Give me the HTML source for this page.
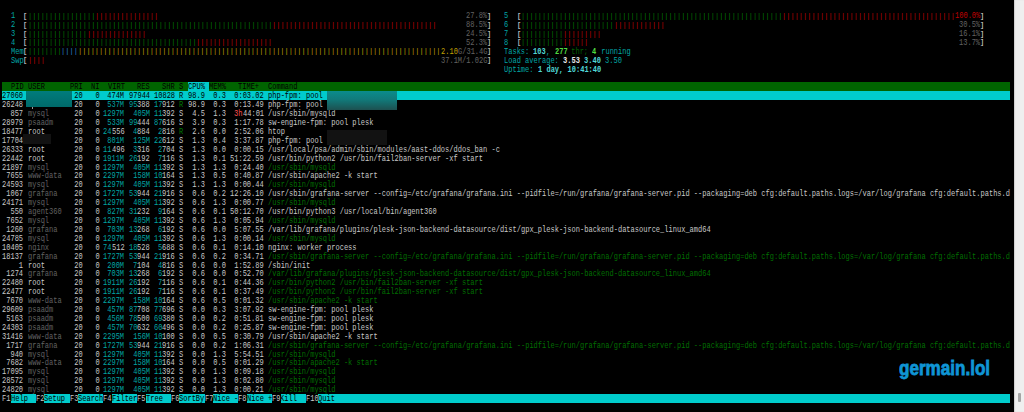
<!DOCTYPE html>
<html><head><meta charset="utf-8"><style>
html,body{margin:0;padding:0;background:#000;-webkit-font-smoothing:antialiased;width:1024px;height:412px;overflow:hidden;position:relative}
.row{position:absolute;left:0;height:8.906px;width:1024px}
.t{position:absolute;top:1.4px;white-space:pre;font-family:"Liberation Mono",monospace;font-size:9px;line-height:8.906px;height:8.906px;transform:scaleX(0.78061);transform-origin:0 0}
.bg{position:absolute;top:0}
.n{color:#c8c8c8}
.w{color:#eaeaea}
.c{color:#00a6a6}
.cb{color:#50d8d8}
.sh{color:#626262}
.g{color:#006e00}
.gt{color:#006000}
.gd{color:#007a00}
.gb{color:#50dc40}
.r{color:#c00000}
.rb{color:#ff5050}
.b{color:#2a84d0}
.y{color:#c0a000}
.k{color:#000000}

#strip{position:absolute;left:1014px;top:0;width:10px;height:412px;background:#efefef;box-shadow:inset 1px 0 1px #cfcfcf}
#thumb{position:absolute;left:1018px;top:392.5px;width:3px;height:9.5px;background:#a5a5a5;border-radius:1px}
.blur1{position:absolute;background:linear-gradient(#0a8c8c 0%,#117a7a 45%,#1d5050 100%)}
.blur1b{position:absolute;background:linear-gradient(#007c7c,#006a6a)}
.blur2{position:absolute;background:#121212}
.bar{font-size:7.5px !important;top:1px !important;transform:scaleX(0.93673) !important}
#wm{position:absolute;left:899.2px;top:356.6px;font-family:"Liberation Sans",sans-serif;font-weight:bold;font-size:100px;line-height:normal;color:#0f95d5;-webkit-text-stroke:4px #0f95d5;transform:scale(0.1707,0.197);transform-origin:0 0;white-space:pre}
.cb,.gb,.wb{font-weight:bold}
.wb{color:#eaeaea}
#wrap{position:absolute;left:0;top:0;width:1024px;height:412px;filter:none}
</style></head><body><div id="wrap">
<div class="bg" style="left:2.24px;top:82.004px;width:1007.62px;height:8.906px;background:#006400"></div>
<div class="bg" style="left:187.74px;top:82.004px;width:21.08px;height:8.906px;background:#00cccc"></div>
<div class="bg" style="left:2.24px;top:90.910px;width:1007.62px;height:8.906px;background:#00cccc"></div>
<div class="bg" style="left:10.67px;top:393.714px;width:25.30px;height:8.906px;background:#00cccc"></div>
<div class="bg" style="left:44.40px;top:393.714px;width:25.30px;height:8.906px;background:#00cccc"></div>
<div class="bg" style="left:78.13px;top:393.714px;width:25.30px;height:8.906px;background:#00cccc"></div>
<div class="bg" style="left:111.86px;top:393.714px;width:25.30px;height:8.906px;background:#00cccc"></div>
<div class="bg" style="left:145.58px;top:393.714px;width:25.30px;height:8.906px;background:#00cccc"></div>
<div class="bg" style="left:179.31px;top:393.714px;width:25.30px;height:8.906px;background:#00cccc"></div>
<div class="bg" style="left:213.04px;top:393.714px;width:25.30px;height:8.906px;background:#00cccc"></div>
<div class="bg" style="left:246.77px;top:393.714px;width:25.30px;height:8.906px;background:#00cccc"></div>
<div class="bg" style="left:280.50px;top:393.714px;width:25.30px;height:8.906px;background:#00cccc"></div>
<div class="bg" style="left:318.44px;top:393.714px;width:691.42px;height:8.906px;background:#00cccc"></div>
<div class="row" style="top:10.756px"><span class="t c" style="left:10.672px">1</span><span class="t bar w" style="left:23.320px">[</span><span class="t bar gd" style="left:27.536px">||||||||||||||||</span><span class="t bar r" style="left:94.992px">|||||||||||||||</span><span class="t sh" style="left:466.000px">27.8%</span><span class="t bar w" style="left:487.080px">]</span><span class="t c" style="left:503.944px">5</span><span class="t bar w" style="left:516.592px">[</span><span class="t bar gd" style="left:520.808px">||||||||||||||||||||||||||||||||||||||||||||||||||||||||||||||</span><span class="t bar r" style="left:782.200px">|||||||||||||||||||||||||||||||||||||||||</span><span class="t r" style="left:955.056px">100.0%</span><span class="t bar w" style="left:980.352px">]</span></div>
<div class="row" style="top:19.662px"><span class="t c" style="left:10.672px">2</span><span class="t bar w" style="left:23.320px">[</span><span class="t bar gd" style="left:27.536px">||||||||||||||||||||||||||||||||||||||||||||||||||||||||||</span><span class="t bar r" style="left:272.064px">|||||||||||||||||||||||||||||||||||||||</span><span class="t sh" style="left:466.000px">88.5%</span><span class="t bar w" style="left:487.080px">]</span><span class="t c" style="left:503.944px">6</span><span class="t bar w" style="left:516.592px">[</span><span class="t bar gd" style="left:520.808px">||||||||||||||||||||||</span><span class="t bar r" style="left:613.560px">||||||||||||</span><span class="t sh" style="left:959.272px">30.5%</span><span class="t bar w" style="left:980.352px">]</span></div>
<div class="row" style="top:28.568px"><span class="t c" style="left:10.672px">3</span><span class="t bar w" style="left:23.320px">[</span><span class="t bar gd" style="left:27.536px">||||||||||||||</span><span class="t bar r" style="left:86.560px">||||||||||||||</span><span class="t sh" style="left:466.000px">24.5%</span><span class="t bar w" style="left:487.080px">]</span><span class="t c" style="left:503.944px">7</span><span class="t bar w" style="left:516.592px">[</span><span class="t bar gd" style="left:520.808px">||||||||||</span><span class="t bar r" style="left:562.968px">|||||||||</span><span class="t sh" style="left:959.272px">16.1%</span><span class="t bar w" style="left:980.352px">]</span></div>
<div class="row" style="top:37.474px"><span class="t c" style="left:10.672px">4</span><span class="t bar w" style="left:23.320px">[</span><span class="t bar gd" style="left:27.536px">||||||||||||||||||||||||||||||||||||||||</span><span class="t bar r" style="left:196.176px">||||||||||||||||||</span><span class="t sh" style="left:466.000px">52.3%</span><span class="t bar w" style="left:487.080px">]</span><span class="t c" style="left:503.944px">8</span><span class="t bar w" style="left:516.592px">[</span><span class="t bar gd" style="left:520.808px">||||||||||</span><span class="t bar r" style="left:562.968px">||||||</span><span class="t sh" style="left:959.272px">13.7%</span><span class="t bar w" style="left:980.352px">]</span></div>
<div class="row" style="top:46.380px"><span class="t c" style="left:10.672px">Mem</span><span class="t bar w" style="left:23.320px">[</span><span class="t bar gd" style="left:27.536px">||||||||</span><span class="t bar b" style="left:61.264px">||||</span><span class="t bar y" style="left:78.128px">||||||||||||||||||||||||||||||||||||||||||||||||||||||||||||||||||||||||||||||||||||||</span><span class="t y" style="left:440.704px">2.10</span><span class="t sh" style="left:457.568px">G/31.4G</span><span class="t bar w" style="left:487.080px">]</span><span class="t c" style="left:503.944px">Tasks: </span><span class="t cb" style="left:533.456px">103</span><span class="t c" style="left:546.104px">, </span><span class="t gb" style="left:554.536px">277</span><span class="t gt" style="left:567.184px"> thr;</span><span class="t c" style="left:588.264px"> </span><span class="t gb" style="left:592.480px">4</span><span class="t c" style="left:596.696px"> running</span></div>
<div class="row" style="top:55.286px"><span class="t c" style="left:10.672px">Swp</span><span class="t bar w" style="left:23.320px">[</span><span class="t bar r" style="left:27.536px">||||</span><span class="t sh" style="left:440.704px">37.1M/1.02G</span><span class="t bar w" style="left:487.080px">]</span><span class="t c" style="left:503.944px">Load average: </span><span class="t wb" style="left:562.968px">3.53 </span><span class="t cb" style="left:584.048px">3.40 </span><span class="t c" style="left:605.128px">3.50</span></div>
<div class="row" style="top:64.192px"><span class="t c" style="left:503.944px">Uptime: </span><span class="t cb" style="left:537.672px">1 day, 10:41:40</span></div>
<div class="row" style="top:82.004px"><span class="t k" style="left:10.672px">PID</span><span class="t k" style="left:27.536px">USER</span><span class="t k" style="left:69.696px">PRI</span><span class="t k" style="left:90.776px">NI</span><span class="t k" style="left:107.640px">VIRT</span><span class="t k" style="left:137.152px">RES</span><span class="t k" style="left:162.448px">SHR</span><span class="t k" style="left:179.312px">S</span><span class="t k" style="left:187.744px">CPU%</span><span class="t k" style="left:208.824px">MEM%</span><span class="t k" style="left:238.336px">TIME+</span><span class="t k" style="left:267.848px">Command</span></div>
<div class="row" style="top:90.910px"><span class="t k" style="left:2.240px">27060</span><span class="t k" style="left:69.696px"> 20</span><span class="t k" style="left:86.560px">  0</span><span class="t k" style="left:103.424px"> 474M</span><span class="t k" style="left:128.720px">97944</span><span class="t k" style="left:154.016px">10828</span><span class="t k" style="left:179.312px">R</span><span class="t k" style="left:187.744px">98.9</span><span class="t k" style="left:208.824px"> 0.3</span><span class="t k" style="left:229.904px"> 0:03.02</span><span class="t k" style="left:267.848px">php-fpm: pool</span></div>
<div class="row" style="top:99.816px"><span class="t n" style="left:2.240px">26248</span><span class="t n" style="left:69.696px"> 20</span><span class="t n" style="left:86.560px">  0</span><span class="t c" style="left:103.424px"> 537M</span><span class="t c" style="left:128.720px">95</span><span class="t n" style="left:137.152px">388</span><span class="t c" style="left:154.016px">17</span><span class="t n" style="left:162.448px">912</span><span class="t gd" style="left:179.312px">R</span><span class="t n" style="left:187.744px">98.9</span><span class="t n" style="left:208.824px"> 0.3</span><span class="t n" style="left:229.904px"> 0:13.49</span><span class="t n" style="left:267.848px">php-fpm: pool</span></div>
<div class="row" style="top:108.722px"><span class="t n" style="left:2.240px">  857</span><span class="t sh" style="left:27.536px">mysql</span><span class="t n" style="left:69.696px"> 20</span><span class="t n" style="left:86.560px">  0</span><span class="t c" style="left:103.424px">1297M</span><span class="t c" style="left:128.720px"> 405M</span><span class="t c" style="left:154.016px">11</span><span class="t n" style="left:162.448px">392</span><span class="t n" style="left:179.312px">S</span><span class="t n" style="left:187.744px"> 4.5</span><span class="t n" style="left:208.824px"> 1.3</span><span class="t rb" style="left:234.120px">3h</span><span class="t n" style="left:242.552px">44:01</span><span class="t n" style="left:267.848px">/usr/sbin/mysqld</span></div>
<div class="row" style="top:117.628px"><span class="t n" style="left:2.240px">28979</span><span class="t sh" style="left:27.536px">psaadm</span><span class="t n" style="left:69.696px"> 20</span><span class="t n" style="left:86.560px">  0</span><span class="t c" style="left:103.424px"> 533M</span><span class="t c" style="left:128.720px">99</span><span class="t n" style="left:137.152px">444</span><span class="t c" style="left:154.016px">87</span><span class="t n" style="left:162.448px">616</span><span class="t n" style="left:179.312px">S</span><span class="t n" style="left:187.744px"> 3.9</span><span class="t n" style="left:208.824px"> 0.3</span><span class="t n" style="left:229.904px"> 1:17.78</span><span class="t n" style="left:267.848px">sw-engine-fpm: pool plesk</span></div>
<div class="row" style="top:126.534px"><span class="t n" style="left:2.240px">18477</span><span class="t n" style="left:27.536px">root</span><span class="t n" style="left:69.696px"> 20</span><span class="t n" style="left:86.560px">  0</span><span class="t c" style="left:103.424px">24</span><span class="t n" style="left:111.856px">556</span><span class="t c" style="left:132.936px">4</span><span class="t n" style="left:137.152px">884</span><span class="t c" style="left:158.232px">2</span><span class="t n" style="left:162.448px">816</span><span class="t gd" style="left:179.312px">R</span><span class="t n" style="left:187.744px"> 2.6</span><span class="t n" style="left:208.824px"> 0.0</span><span class="t n" style="left:229.904px"> 2:52.06</span><span class="t n" style="left:267.848px">htop</span></div>
<div class="row" style="top:135.440px"><span class="t n" style="left:2.240px">17704</span><span class="t n" style="left:69.696px"> 20</span><span class="t n" style="left:86.560px">  0</span><span class="t c" style="left:103.424px"> 801M</span><span class="t c" style="left:128.720px"> 125M</span><span class="t c" style="left:154.016px">22</span><span class="t n" style="left:162.448px">612</span><span class="t n" style="left:179.312px">S</span><span class="t n" style="left:187.744px"> 1.3</span><span class="t n" style="left:208.824px"> 0.4</span><span class="t n" style="left:229.904px"> 3:37.87</span><span class="t n" style="left:267.848px">php-fpm: pool</span></div>
<div class="row" style="top:144.346px"><span class="t n" style="left:2.240px">26333</span><span class="t n" style="left:27.536px">root</span><span class="t n" style="left:69.696px"> 20</span><span class="t n" style="left:86.560px">  0</span><span class="t c" style="left:103.424px">11</span><span class="t n" style="left:111.856px">496</span><span class="t c" style="left:132.936px">3</span><span class="t n" style="left:137.152px">316</span><span class="t c" style="left:158.232px">2</span><span class="t n" style="left:162.448px">704</span><span class="t n" style="left:179.312px">S</span><span class="t n" style="left:187.744px"> 1.3</span><span class="t n" style="left:208.824px"> 0.0</span><span class="t n" style="left:229.904px"> 0:00.15</span><span class="t n" style="left:267.848px">/usr/local/psa/admin/sbin/modules/aast-ddos/ddos_ban -c</span></div>
<div class="row" style="top:153.252px"><span class="t n" style="left:2.240px">22442</span><span class="t n" style="left:27.536px">root</span><span class="t n" style="left:69.696px"> 20</span><span class="t n" style="left:86.560px">  0</span><span class="t c" style="left:103.424px">1911M</span><span class="t c" style="left:128.720px">26</span><span class="t n" style="left:137.152px">192</span><span class="t c" style="left:158.232px">7</span><span class="t n" style="left:162.448px">116</span><span class="t n" style="left:179.312px">S</span><span class="t n" style="left:187.744px"> 1.3</span><span class="t n" style="left:208.824px"> 0.1</span><span class="t n" style="left:229.904px">51:22.59</span><span class="t n" style="left:267.848px">/usr/bin/python2 /usr/bin/fail2ban-server -xf start</span></div>
<div class="row" style="top:162.158px"><span class="t n" style="left:2.240px">21897</span><span class="t sh" style="left:27.536px">mysql</span><span class="t n" style="left:69.696px"> 20</span><span class="t n" style="left:86.560px">  0</span><span class="t c" style="left:103.424px">1297M</span><span class="t c" style="left:128.720px"> 405M</span><span class="t c" style="left:154.016px">11</span><span class="t n" style="left:162.448px">392</span><span class="t n" style="left:179.312px">S</span><span class="t n" style="left:187.744px"> 1.3</span><span class="t n" style="left:208.824px"> 1.3</span><span class="t n" style="left:229.904px"> 0:24.40</span><span class="t g" style="left:267.848px">/usr/sbin/mysqld</span></div>
<div class="row" style="top:171.064px"><span class="t n" style="left:2.240px"> 7655</span><span class="t sh" style="left:27.536px">www-data</span><span class="t n" style="left:69.696px"> 20</span><span class="t n" style="left:86.560px">  0</span><span class="t c" style="left:103.424px">2297M</span><span class="t c" style="left:128.720px"> 158M</span><span class="t c" style="left:154.016px">10</span><span class="t n" style="left:162.448px">164</span><span class="t n" style="left:179.312px">S</span><span class="t n" style="left:187.744px"> 1.3</span><span class="t n" style="left:208.824px"> 0.5</span><span class="t n" style="left:229.904px"> 0:40.87</span><span class="t n" style="left:267.848px">/usr/sbin/apache2 -k start</span></div>
<div class="row" style="top:179.970px"><span class="t n" style="left:2.240px">24593</span><span class="t sh" style="left:27.536px">mysql</span><span class="t n" style="left:69.696px"> 20</span><span class="t n" style="left:86.560px">  0</span><span class="t c" style="left:103.424px">1297M</span><span class="t c" style="left:128.720px"> 405M</span><span class="t c" style="left:154.016px">11</span><span class="t n" style="left:162.448px">392</span><span class="t n" style="left:179.312px">S</span><span class="t n" style="left:187.744px"> 1.3</span><span class="t n" style="left:208.824px"> 1.3</span><span class="t n" style="left:229.904px"> 0:00.44</span><span class="t g" style="left:267.848px">/usr/sbin/mysqld</span></div>
<div class="row" style="top:188.876px"><span class="t n" style="left:2.240px"> 1067</span><span class="t sh" style="left:27.536px">grafana</span><span class="t n" style="left:69.696px"> 20</span><span class="t n" style="left:86.560px">  0</span><span class="t c" style="left:103.424px">1727M</span><span class="t c" style="left:128.720px">53</span><span class="t n" style="left:137.152px">944</span><span class="t c" style="left:154.016px">21</span><span class="t n" style="left:162.448px">916</span><span class="t n" style="left:179.312px">S</span><span class="t n" style="left:187.744px"> 0.6</span><span class="t n" style="left:208.824px"> 0.2</span><span class="t n" style="left:229.904px">12:26.10</span><span class="t n" style="left:267.848px">/usr/sbin/grafana-server --config=/etc/grafana/grafana.ini --pidfile=/run/grafana/grafana-server.pid --packaging=deb cfg:default.paths.logs=/var/log/grafana cfg:default.paths.d</span></div>
<div class="row" style="top:197.782px"><span class="t n" style="left:2.240px">24171</span><span class="t sh" style="left:27.536px">mysql</span><span class="t n" style="left:69.696px"> 20</span><span class="t n" style="left:86.560px">  0</span><span class="t c" style="left:103.424px">1297M</span><span class="t c" style="left:128.720px"> 405M</span><span class="t c" style="left:154.016px">11</span><span class="t n" style="left:162.448px">392</span><span class="t n" style="left:179.312px">S</span><span class="t n" style="left:187.744px"> 0.6</span><span class="t n" style="left:208.824px"> 1.3</span><span class="t n" style="left:229.904px"> 0:00.77</span><span class="t g" style="left:267.848px">/usr/sbin/mysqld</span></div>
<div class="row" style="top:206.688px"><span class="t n" style="left:2.240px">  550</span><span class="t sh" style="left:27.536px">agent360</span><span class="t n" style="left:69.696px"> 20</span><span class="t n" style="left:86.560px">  0</span><span class="t c" style="left:103.424px"> 827M</span><span class="t c" style="left:128.720px">31</span><span class="t n" style="left:137.152px">232</span><span class="t c" style="left:158.232px">9</span><span class="t n" style="left:162.448px">164</span><span class="t n" style="left:179.312px">S</span><span class="t n" style="left:187.744px"> 0.6</span><span class="t n" style="left:208.824px"> 0.1</span><span class="t n" style="left:229.904px">50:12.70</span><span class="t n" style="left:267.848px">/usr/bin/python3 /usr/local/bin/agent360</span></div>
<div class="row" style="top:215.594px"><span class="t n" style="left:2.240px"> 7652</span><span class="t sh" style="left:27.536px">mysql</span><span class="t n" style="left:69.696px"> 20</span><span class="t n" style="left:86.560px">  0</span><span class="t c" style="left:103.424px">1297M</span><span class="t c" style="left:128.720px"> 405M</span><span class="t c" style="left:154.016px">11</span><span class="t n" style="left:162.448px">392</span><span class="t n" style="left:179.312px">S</span><span class="t n" style="left:187.744px"> 0.6</span><span class="t n" style="left:208.824px"> 1.3</span><span class="t n" style="left:229.904px"> 0:05.94</span><span class="t g" style="left:267.848px">/usr/sbin/mysqld</span></div>
<div class="row" style="top:224.500px"><span class="t n" style="left:2.240px"> 1260</span><span class="t sh" style="left:27.536px">grafana</span><span class="t n" style="left:69.696px"> 20</span><span class="t n" style="left:86.560px">  0</span><span class="t c" style="left:103.424px"> 703M</span><span class="t c" style="left:128.720px">13</span><span class="t n" style="left:137.152px">268</span><span class="t c" style="left:158.232px">6</span><span class="t n" style="left:162.448px">192</span><span class="t n" style="left:179.312px">S</span><span class="t n" style="left:187.744px"> 0.6</span><span class="t n" style="left:208.824px"> 0.0</span><span class="t n" style="left:229.904px"> 5:07.55</span><span class="t n" style="left:267.848px">/var/lib/grafana/plugins/plesk-json-backend-datasource/dist/gpx_plesk-json-backend-datasource_linux_amd64</span></div>
<div class="row" style="top:233.406px"><span class="t n" style="left:2.240px">24785</span><span class="t sh" style="left:27.536px">mysql</span><span class="t n" style="left:69.696px"> 20</span><span class="t n" style="left:86.560px">  0</span><span class="t c" style="left:103.424px">1297M</span><span class="t c" style="left:128.720px"> 405M</span><span class="t c" style="left:154.016px">11</span><span class="t n" style="left:162.448px">392</span><span class="t n" style="left:179.312px">S</span><span class="t n" style="left:187.744px"> 0.6</span><span class="t n" style="left:208.824px"> 1.3</span><span class="t n" style="left:229.904px"> 0:00.14</span><span class="t g" style="left:267.848px">/usr/sbin/mysqld</span></div>
<div class="row" style="top:242.312px"><span class="t n" style="left:2.240px">10405</span><span class="t sh" style="left:27.536px">nginx</span><span class="t n" style="left:69.696px"> 20</span><span class="t n" style="left:86.560px">  0</span><span class="t c" style="left:103.424px">74</span><span class="t n" style="left:111.856px">512</span><span class="t c" style="left:128.720px">18</span><span class="t n" style="left:137.152px">528</span><span class="t c" style="left:158.232px">5</span><span class="t n" style="left:162.448px">688</span><span class="t n" style="left:179.312px">S</span><span class="t n" style="left:187.744px"> 0.6</span><span class="t n" style="left:208.824px"> 0.1</span><span class="t n" style="left:229.904px"> 0:14.10</span><span class="t n" style="left:267.848px">nginx: worker process</span></div>
<div class="row" style="top:251.218px"><span class="t n" style="left:2.240px">18137</span><span class="t sh" style="left:27.536px">grafana</span><span class="t n" style="left:69.696px"> 20</span><span class="t n" style="left:86.560px">  0</span><span class="t c" style="left:103.424px">1727M</span><span class="t c" style="left:128.720px">53</span><span class="t n" style="left:137.152px">944</span><span class="t c" style="left:154.016px">21</span><span class="t n" style="left:162.448px">916</span><span class="t n" style="left:179.312px">S</span><span class="t n" style="left:187.744px"> 0.6</span><span class="t n" style="left:208.824px"> 0.2</span><span class="t n" style="left:229.904px"> 0:34.71</span><span class="t g" style="left:267.848px">/usr/sbin/grafana-server --config=/etc/grafana/grafana.ini --pidfile=/run/grafana/grafana-server.pid --packaging=deb cfg:default.paths.logs=/var/log/grafana cfg:default.paths.d</span></div>
<div class="row" style="top:260.124px"><span class="t n" style="left:2.240px">    1</span><span class="t n" style="left:27.536px">root</span><span class="t n" style="left:69.696px"> 20</span><span class="t n" style="left:86.560px">  0</span><span class="t c" style="left:103.424px"> 200M</span><span class="t c" style="left:132.936px">7</span><span class="t n" style="left:137.152px">104</span><span class="t c" style="left:158.232px">4</span><span class="t n" style="left:162.448px">816</span><span class="t n" style="left:179.312px">S</span><span class="t n" style="left:187.744px"> 0.6</span><span class="t n" style="left:208.824px"> 0.0</span><span class="t n" style="left:229.904px"> 1:52.89</span><span class="t n" style="left:267.848px">/sbin/init</span></div>
<div class="row" style="top:269.030px"><span class="t n" style="left:2.240px"> 1274</span><span class="t sh" style="left:27.536px">grafana</span><span class="t n" style="left:69.696px"> 20</span><span class="t n" style="left:86.560px">  0</span><span class="t c" style="left:103.424px"> 703M</span><span class="t c" style="left:128.720px">13</span><span class="t n" style="left:137.152px">268</span><span class="t c" style="left:158.232px">6</span><span class="t n" style="left:162.448px">192</span><span class="t n" style="left:179.312px">S</span><span class="t n" style="left:187.744px"> 0.6</span><span class="t n" style="left:208.824px"> 0.0</span><span class="t n" style="left:229.904px"> 0:52.70</span><span class="t g" style="left:267.848px">/var/lib/grafana/plugins/plesk-json-backend-datasource/dist/gpx_plesk-json-backend-datasource_linux_amd64</span></div>
<div class="row" style="top:277.936px"><span class="t n" style="left:2.240px">22480</span><span class="t n" style="left:27.536px">root</span><span class="t n" style="left:69.696px"> 20</span><span class="t n" style="left:86.560px">  0</span><span class="t c" style="left:103.424px">1911M</span><span class="t c" style="left:128.720px">26</span><span class="t n" style="left:137.152px">192</span><span class="t c" style="left:158.232px">7</span><span class="t n" style="left:162.448px">116</span><span class="t n" style="left:179.312px">S</span><span class="t n" style="left:187.744px"> 0.6</span><span class="t n" style="left:208.824px"> 0.1</span><span class="t n" style="left:229.904px"> 0:44.36</span><span class="t g" style="left:267.848px">/usr/bin/python2 /usr/bin/fail2ban-server -xf start</span></div>
<div class="row" style="top:286.842px"><span class="t n" style="left:2.240px">22477</span><span class="t n" style="left:27.536px">root</span><span class="t n" style="left:69.696px"> 20</span><span class="t n" style="left:86.560px">  0</span><span class="t c" style="left:103.424px">1911M</span><span class="t c" style="left:128.720px">26</span><span class="t n" style="left:137.152px">192</span><span class="t c" style="left:158.232px">7</span><span class="t n" style="left:162.448px">116</span><span class="t n" style="left:179.312px">S</span><span class="t n" style="left:187.744px"> 0.6</span><span class="t n" style="left:208.824px"> 0.1</span><span class="t n" style="left:229.904px"> 0:37.49</span><span class="t g" style="left:267.848px">/usr/bin/python2 /usr/bin/fail2ban-server -xf start</span></div>
<div class="row" style="top:295.748px"><span class="t n" style="left:2.240px"> 7670</span><span class="t sh" style="left:27.536px">www-data</span><span class="t n" style="left:69.696px"> 20</span><span class="t n" style="left:86.560px">  0</span><span class="t c" style="left:103.424px">2297M</span><span class="t c" style="left:128.720px"> 158M</span><span class="t c" style="left:154.016px">10</span><span class="t n" style="left:162.448px">164</span><span class="t n" style="left:179.312px">S</span><span class="t n" style="left:187.744px"> 0.6</span><span class="t n" style="left:208.824px"> 0.5</span><span class="t n" style="left:229.904px"> 0:01.32</span><span class="t g" style="left:267.848px">/usr/sbin/apache2 -k start</span></div>
<div class="row" style="top:304.654px"><span class="t n" style="left:2.240px">29609</span><span class="t sh" style="left:27.536px">psaadm</span><span class="t n" style="left:69.696px"> 20</span><span class="t n" style="left:86.560px">  0</span><span class="t c" style="left:103.424px"> 457M</span><span class="t c" style="left:128.720px">87</span><span class="t n" style="left:137.152px">708</span><span class="t c" style="left:154.016px">77</span><span class="t n" style="left:162.448px">696</span><span class="t n" style="left:179.312px">S</span><span class="t n" style="left:187.744px"> 0.0</span><span class="t n" style="left:208.824px"> 0.3</span><span class="t n" style="left:229.904px"> 3:07.92</span><span class="t n" style="left:267.848px">sw-engine-fpm: pool plesk</span></div>
<div class="row" style="top:313.560px"><span class="t n" style="left:2.240px"> 5163</span><span class="t sh" style="left:27.536px">psaadm</span><span class="t n" style="left:69.696px"> 20</span><span class="t n" style="left:86.560px">  0</span><span class="t c" style="left:103.424px"> 456M</span><span class="t c" style="left:128.720px">78</span><span class="t n" style="left:137.152px">500</span><span class="t c" style="left:154.016px">69</span><span class="t n" style="left:162.448px">380</span><span class="t n" style="left:179.312px">S</span><span class="t n" style="left:187.744px"> 0.0</span><span class="t n" style="left:208.824px"> 0.2</span><span class="t n" style="left:229.904px"> 0:51.81</span><span class="t n" style="left:267.848px">sw-engine-fpm: pool plesk</span></div>
<div class="row" style="top:322.466px"><span class="t n" style="left:2.240px">24303</span><span class="t sh" style="left:27.536px">psaadm</span><span class="t n" style="left:69.696px"> 20</span><span class="t n" style="left:86.560px">  0</span><span class="t c" style="left:103.424px"> 457M</span><span class="t c" style="left:128.720px">70</span><span class="t n" style="left:137.152px">632</span><span class="t c" style="left:154.016px">60</span><span class="t n" style="left:162.448px">496</span><span class="t n" style="left:179.312px">S</span><span class="t n" style="left:187.744px"> 0.0</span><span class="t n" style="left:208.824px"> 0.2</span><span class="t n" style="left:229.904px"> 0:25.87</span><span class="t n" style="left:267.848px">sw-engine-fpm: pool plesk</span></div>
<div class="row" style="top:331.372px"><span class="t n" style="left:2.240px">31416</span><span class="t sh" style="left:27.536px">www-data</span><span class="t n" style="left:69.696px"> 20</span><span class="t n" style="left:86.560px">  0</span><span class="t c" style="left:103.424px">2295M</span><span class="t c" style="left:128.720px"> 156M</span><span class="t c" style="left:154.016px">10</span><span class="t n" style="left:162.448px">100</span><span class="t n" style="left:179.312px">S</span><span class="t n" style="left:187.744px"> 0.0</span><span class="t n" style="left:208.824px"> 0.5</span><span class="t n" style="left:229.904px"> 0:30.79</span><span class="t n" style="left:267.848px">/usr/sbin/apache2 -k start</span></div>
<div class="row" style="top:340.278px"><span class="t n" style="left:2.240px"> 1717</span><span class="t sh" style="left:27.536px">grafana</span><span class="t n" style="left:69.696px"> 20</span><span class="t n" style="left:86.560px">  0</span><span class="t c" style="left:103.424px">1727M</span><span class="t c" style="left:128.720px">53</span><span class="t n" style="left:137.152px">944</span><span class="t c" style="left:154.016px">21</span><span class="t n" style="left:162.448px">916</span><span class="t n" style="left:179.312px">S</span><span class="t n" style="left:187.744px"> 0.0</span><span class="t n" style="left:208.824px"> 0.2</span><span class="t n" style="left:229.904px"> 1:06.31</span><span class="t g" style="left:267.848px">/usr/sbin/grafana-server --config=/etc/grafana/grafana.ini --pidfile=/run/grafana/grafana-server.pid --packaging=deb cfg:default.paths.logs=/var/log/grafana cfg:default.paths.d</span></div>
<div class="row" style="top:349.184px"><span class="t n" style="left:2.240px">  940</span><span class="t sh" style="left:27.536px">mysql</span><span class="t n" style="left:69.696px"> 20</span><span class="t n" style="left:86.560px">  0</span><span class="t c" style="left:103.424px">1297M</span><span class="t c" style="left:128.720px"> 405M</span><span class="t c" style="left:154.016px">11</span><span class="t n" style="left:162.448px">392</span><span class="t n" style="left:179.312px">S</span><span class="t n" style="left:187.744px"> 0.0</span><span class="t n" style="left:208.824px"> 1.3</span><span class="t n" style="left:229.904px"> 5:54.51</span><span class="t g" style="left:267.848px">/usr/sbin/mysqld</span></div>
<div class="row" style="top:358.090px"><span class="t n" style="left:2.240px"> 7682</span><span class="t sh" style="left:27.536px">www-data</span><span class="t n" style="left:69.696px"> 20</span><span class="t n" style="left:86.560px">  0</span><span class="t c" style="left:103.424px">2297M</span><span class="t c" style="left:128.720px"> 158M</span><span class="t c" style="left:154.016px">10</span><span class="t n" style="left:162.448px">164</span><span class="t n" style="left:179.312px">S</span><span class="t n" style="left:187.744px"> 0.0</span><span class="t n" style="left:208.824px"> 0.5</span><span class="t n" style="left:229.904px"> 0:01.29</span><span class="t g" style="left:267.848px">/usr/sbin/apache2 -k start</span></div>
<div class="row" style="top:366.996px"><span class="t n" style="left:2.240px">17095</span><span class="t sh" style="left:27.536px">mysql</span><span class="t n" style="left:69.696px"> 20</span><span class="t n" style="left:86.560px">  0</span><span class="t c" style="left:103.424px">1297M</span><span class="t c" style="left:128.720px"> 405M</span><span class="t c" style="left:154.016px">11</span><span class="t n" style="left:162.448px">392</span><span class="t n" style="left:179.312px">S</span><span class="t n" style="left:187.744px"> 0.0</span><span class="t n" style="left:208.824px"> 1.3</span><span class="t n" style="left:229.904px"> 0:09.18</span><span class="t g" style="left:267.848px">/usr/sbin/mysqld</span></div>
<div class="row" style="top:375.902px"><span class="t n" style="left:2.240px">28572</span><span class="t sh" style="left:27.536px">mysql</span><span class="t n" style="left:69.696px"> 20</span><span class="t n" style="left:86.560px">  0</span><span class="t c" style="left:103.424px">1297M</span><span class="t c" style="left:128.720px"> 405M</span><span class="t c" style="left:154.016px">11</span><span class="t n" style="left:162.448px">392</span><span class="t n" style="left:179.312px">S</span><span class="t n" style="left:187.744px"> 0.0</span><span class="t n" style="left:208.824px"> 1.3</span><span class="t n" style="left:229.904px"> 0:02.80</span><span class="t g" style="left:267.848px">/usr/sbin/mysqld</span></div>
<div class="row" style="top:384.808px"><span class="t n" style="left:2.240px">24820</span><span class="t sh" style="left:27.536px">mysql</span><span class="t n" style="left:69.696px"> 20</span><span class="t n" style="left:86.560px">  0</span><span class="t c" style="left:103.424px">1297M</span><span class="t c" style="left:128.720px"> 405M</span><span class="t c" style="left:154.016px">11</span><span class="t n" style="left:162.448px">392</span><span class="t n" style="left:179.312px">S</span><span class="t n" style="left:187.744px"> 0.0</span><span class="t n" style="left:208.824px"> 1.3</span><span class="t n" style="left:229.904px"> 0:00.21</span><span class="t g" style="left:267.848px">/usr/sbin/mysqld</span></div>
<div class="row" style="top:393.714px"><span class="t n" style="left:2.240px">F1</span><span class="t k" style="left:10.672px">Help  </span><span class="t n" style="left:35.968px">F2</span><span class="t k" style="left:44.400px">Setup </span><span class="t n" style="left:69.696px">F3</span><span class="t k" style="left:78.128px">Search</span><span class="t n" style="left:103.424px">F4</span><span class="t k" style="left:111.856px">Filter</span><span class="t n" style="left:137.152px">F5</span><span class="t k" style="left:145.584px">Tree  </span><span class="t n" style="left:170.880px">F6</span><span class="t k" style="left:179.312px">SortBy</span><span class="t n" style="left:204.608px">F7</span><span class="t k" style="left:213.040px">Nice -</span><span class="t n" style="left:238.336px">F8</span><span class="t k" style="left:246.768px">Nice +</span><span class="t n" style="left:272.064px">F9</span><span class="t k" style="left:280.496px">Kill  </span><span class="t n" style="left:305.792px">F10</span><span class="t k" style="left:318.440px">Quit</span></div>
<div class="blur1b" style="left:25.9px;top:91.1px;width:46.6px;height:15.7px"></div>
<div class="blur1" style="left:326.8px;top:91.3px;width:70.2px;height:18.5px"></div>
<div class="blur2" style="left:23.1px;top:134px;width:28.2px;height:9.8px"></div>
<div class="blur2" style="left:326.8px;top:129.6px;width:60.4px;height:15px"></div>
<div style="position:absolute;left:32px;top:106.8px;width:1.2px;height:1.8px;background:#9a9a9a"></div>
<div id="wm">germain.lol</div>
<div id="strip"></div><div id="thumb"></div>
</div></body></html>
